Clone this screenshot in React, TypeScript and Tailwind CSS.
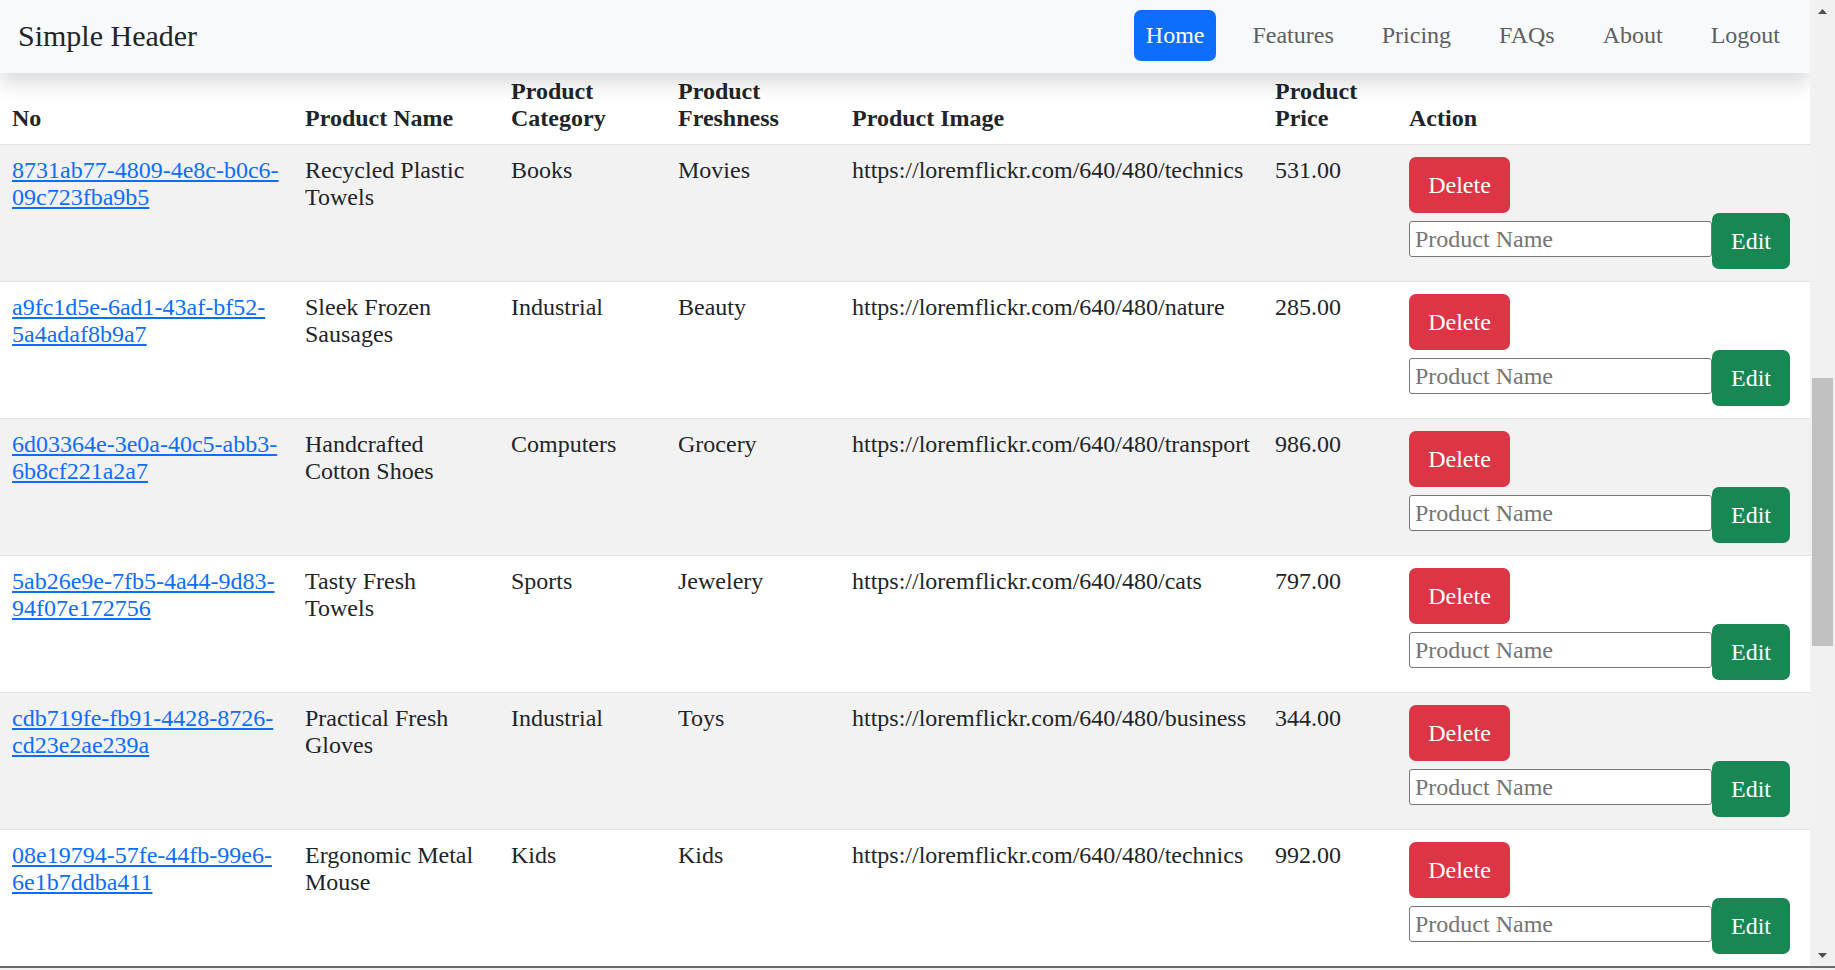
import React from "react";

const rows = [
  {
    id: "8731ab77-4809-4e8c-b0c6-09c723fba9b5",
    name: "Recycled Plastic Towels",
    category: "Books",
    fresh: "Movies",
    image: "https://loremflickr.com/640/480/technics",
    price: "531.00",
  },
  {
    id: "a9fc1d5e-6ad1-43af-bf52-5a4adaf8b9a7",
    name: "Sleek Frozen Sausages",
    category: "Industrial",
    fresh: "Beauty",
    image: "https://loremflickr.com/640/480/nature",
    price: "285.00",
  },
  {
    id: "6d03364e-3e0a-40c5-abb3-6b8cf221a2a7",
    name: "Handcrafted Cotton Shoes",
    category: "Computers",
    fresh: "Grocery",
    image: "https://loremflickr.com/640/480/transport",
    price: "986.00",
  },
  {
    id: "5ab26e9e-7fb5-4a44-9d83-94f07e172756",
    name: "Tasty Fresh Towels",
    category: "Sports",
    fresh: "Jewelery",
    image: "https://loremflickr.com/640/480/cats",
    price: "797.00",
  },
  {
    id: "cdb719fe-fb91-4428-8726-cd23e2ae239a",
    name: "Practical Fresh Gloves",
    category: "Industrial",
    fresh: "Toys",
    image: "https://loremflickr.com/640/480/business",
    price: "344.00",
  },
  {
    id: "08e19794-57fe-44fb-99e6-6e1b7ddba411",
    name: "Ergonomic Metal Mouse",
    category: "Kids",
    fresh: "Kids",
    image: "https://loremflickr.com/640/480/technics",
    price: "992.00",
  },
];

const navItems = ["Home", "Features", "Pricing", "FAQs", "About", "Logout"];

function Scrollbar() {
  return (
    <div className="flex w-[25px] flex-col bg-[#f1f1f1]">
      <div className="flex h-[22px] items-center justify-center">
        <svg width="9" height="5" viewBox="0 0 9 5">
          <polygon points="4.5,0 9,5 0,5" fill="#505050" />
        </svg>
      </div>
      <div className="flex flex-1 flex-col px-[2px] pt-[356px]">
        <div className="h-[268px] w-full bg-[#c1c1c1]" />
      </div>
      <div className="flex h-[22px] items-center justify-center">
        <svg width="9" height="5" viewBox="0 0 9 5">
          <polygon points="0,0 9,0 4.5,5" fill="#505050" />
        </svg>
      </div>
    </div>
  );
}

export default function App() {
  const th = "px-[12px] py-[12px] text-left align-bottom font-bold";
  const td = "px-[12px] py-[12px] align-top";
  return (
    <div className="flex h-[970px] w-[1835px] flex-col overflow-hidden bg-white font-['Liberation_Serif',serif] text-[24px] leading-[27px] text-[#212529]">
      <div className="flex h-[966px]">
        <div className="relative h-[966px] w-[1810px] overflow-hidden">
          <nav className="absolute inset-x-0 top-0 z-10 flex h-[73px] items-center justify-between bg-[#f8f9fa] px-[18px] shadow-[0_10px_20px_rgba(0,0,0,0.15)]">
            <span className="mb-[1px] text-[30px] leading-[34px] text-[#212529]">Simple Header</span>
            <ul className="mb-[2px] flex gap-[24px]">
              {navItems.map((n, i) => (
                <li key={n}>
                  <a
                    className={
                      i === 0
                        ? "block rounded-[7px] bg-[#0d6efd] px-[12px] py-[12px] text-white"
                        : "block px-[12px] py-[12px] text-[#5c5f62]"
                    }
                  >
                    {n}
                  </a>
                </li>
              ))}
            </ul>
          </nav>
          <table className="mt-[66px] w-[1810px] table-fixed border-collapse">
            <colgroup>
              <col className="w-[293px]" />
              <col className="w-[206px]" />
              <col className="w-[167px]" />
              <col className="w-[174px]" />
              <col className="w-[423px]" />
              <col className="w-[134px]" />
              <col className="w-[413px]" />
            </colgroup>
            <thead>
              <tr className="border-b border-[#dee2e6] bg-white">
                <th className={th}>No</th>
                <th className={th}>Product Name</th>
                <th className={th}>Product Category</th>
                <th className={th}>Product Freshness</th>
                <th className={th}>Product Image</th>
                <th className={th}>Product Price</th>
                <th className={th}>Action</th>
              </tr>
            </thead>
            <tbody>
              {rows.map((r, i) => (
                <tr
                  key={r.id + i}
                  className={
                    i % 2 === 0
                      ? "border-b border-[#dee2e6] bg-[#f2f2f2]"
                      : "border-b border-[#dee2e6] bg-white"
                  }
                >
                  <td className={td}>
                    <a className="text-[#0d6efd] underline">{r.id}</a>
                  </td>
                  <td className={td}>{r.name}</td>
                  <td className={td}>{r.category}</td>
                  <td className={td}>{r.fresh}</td>
                  <td className={td + " whitespace-nowrap"}>{r.image}</td>
                  <td className={td}>{r.price}</td>
                  <td className={td}>
                    <div className="flex flex-col items-start">
                      <button className="flex h-[56px] w-[101px] items-center justify-center rounded-[7px] bg-[#dc3545] text-white">
                        Delete
                      </button>
                      <div className="flex items-start">
                        <input
                          className="mt-[8px] h-[36px] w-[303px] rounded-[3px] border border-[#767676] bg-white px-[5px] text-[24px] leading-[27px] text-[#212529] outline-none placeholder:text-[#757575]"
                          placeholder="Product Name"
                        />
                        <button className="flex h-[56px] w-[78px] items-center justify-center rounded-[7px] bg-[#198754] text-white">
                          Edit
                        </button>
                      </div>
                    </div>
                  </td>
                </tr>
              ))}
            </tbody>
          </table>
        </div>
        <Scrollbar />
      </div>
      <div className="h-[4px] border-t-2 border-[#6a6a6a] bg-[#f0f0f0]" />
    </div>
  );
}
